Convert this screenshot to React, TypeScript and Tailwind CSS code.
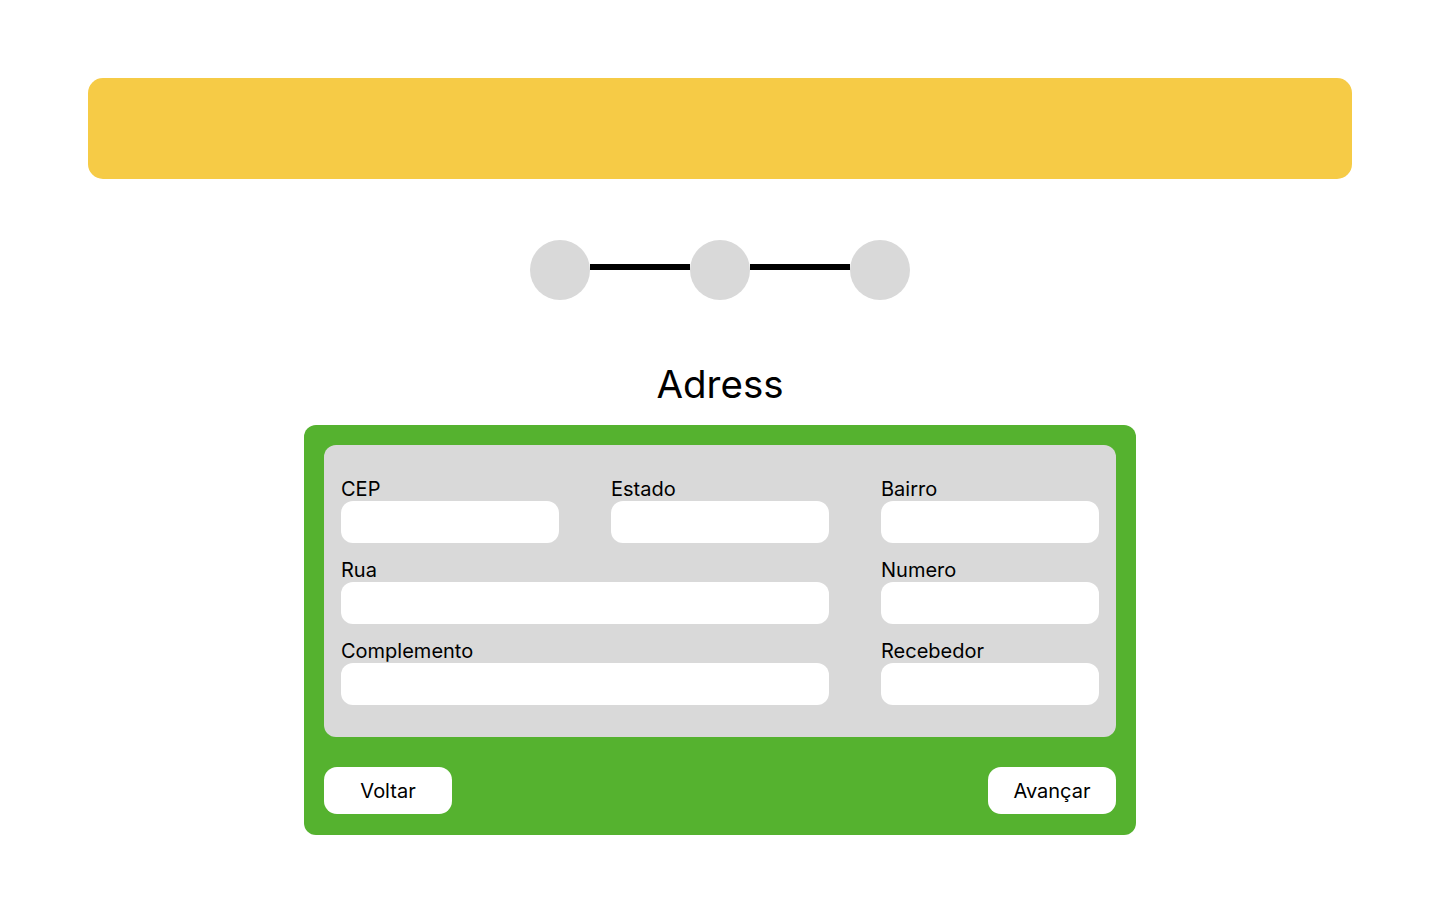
import React from "react"

const fields = [
	{ label: "CEP", span: "col-span-1" },
	{ label: "Estado", span: "col-span-1" },
	{ label: "Bairro", span: "col-span-1" },
	{ label: "Rua", span: "col-span-2" },
	{ label: "Numero", span: "col-span-1" },
	{ label: "Complemento", span: "col-span-2" },
	{ label: "Recebedor", span: "col-span-1" },
]

const Stepper = () => {
	return (
		<div className="flex items-start justify-center">
			<div className="size-[60px] rounded-full bg-[#d9d9d9]" />
			<div className="mt-[24px] h-[5.5px] w-[100px] bg-black" />
			<div className="size-[60px] rounded-full bg-[#d9d9d9]" />
			<div className="mt-[24px] h-[5.5px] w-[100px] bg-black" />
			<div className="size-[60px] rounded-full bg-[#d9d9d9]" />
		</div>
	)
}

export default function App() {
	return (
		<div className="min-h-screen bg-white px-[88px] pt-[78px] font-['Inter',sans-serif] text-black">
			{/* top bar */}
			<div className="h-[101px] w-full rounded-[15px] bg-[#f6cb46]" />

			<div className="mt-[61px]">
				<Stepper />
			</div>

			<h1 className="mt-[61px] text-center text-[38.5px] leading-[46px] font-normal">Adress</h1>

			<div className="mx-auto mt-[18px] w-[832px] rounded-[12px] bg-[#55b22f] px-5 pt-5 pb-[21px]">
				<div className="grid grid-cols-[218px_218px_218px] gap-x-[52px] gap-y-[15px] rounded-[12px] bg-[#d9d9d9] pt-[32px] pr-[17px] pb-[32px] pl-[17px]">
					{fields.map((field) => (
						<label key={field.label} className={`${field.span} flex flex-col`}>
							<span className="text-[20px] leading-[24px]">{field.label}</span>
							<input type="text" className="h-[42px] w-full rounded-[12px] bg-white px-3 outline-none" />
						</label>
					))}
				</div>

				<div className="mt-[30px] flex items-center justify-between">
					<button type="button" className="h-[47px] w-[128px] rounded-[13px] bg-white text-[20px]">
						Voltar
					</button>
					<button type="button" className="h-[47px] w-[128px] rounded-[13px] bg-white text-[20px]">
						Avançar
					</button>
				</div>
			</div>
		</div>
	)
}
